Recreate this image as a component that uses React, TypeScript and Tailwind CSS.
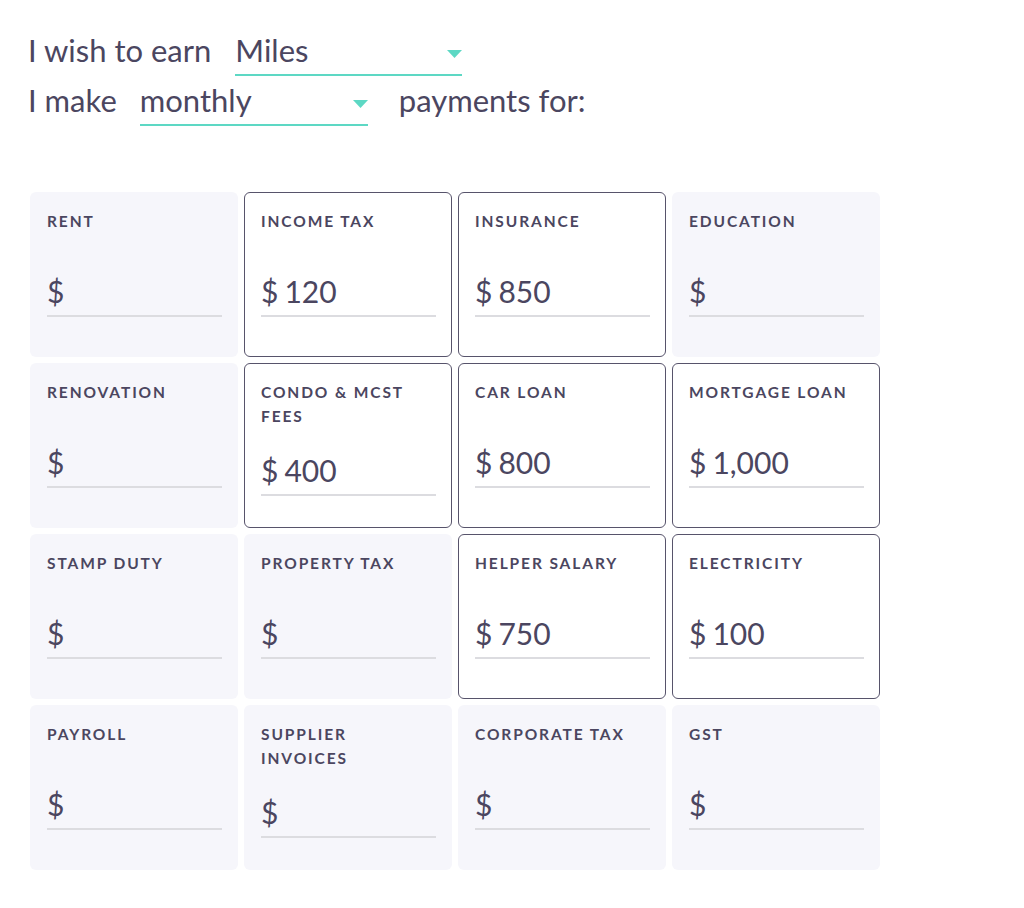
import { useState } from "react";

type Item = { label: string; value?: string };

const items: Item[] = [
  { label: "RENT" },
  { label: "INCOME TAX", value: "120" },
  { label: "INSURANCE", value: "850" },
  { label: "EDUCATION" },
  { label: "RENOVATION" },
  { label: "CONDO & MCST FEES", value: "400" },
  { label: "CAR LOAN", value: "800" },
  { label: "MORTGAGE LOAN", value: "1,000" },
  { label: "STAMP DUTY" },
  { label: "PROPERTY TAX" },
  { label: "HELPER SALARY", value: "750" },
  { label: "ELECTRICITY", value: "100" },
  { label: "PAYROLL" },
  { label: "SUPPLIER INVOICES" },
  { label: "CORPORATE TAX" },
  { label: "GST" },
];

function Caret() {
  return (
    <svg width="15" height="8" viewBox="0 0 15 8" className="shrink-0 mb-[12px]">
      <path d="M0 0h15L7.5 8z" fill="#5dd8c4" />
    </svg>
  );
}

function Picker({ value, width }: { value: string; width: string }) {
  return (
    <div
      className={`${width} flex items-end justify-between border-b-2 border-[#5dd8c4] pb-[4px]`}
    >
      <span className="leading-[40px]">{value}</span>
      <Caret />
    </div>
  );
}

function PaymentCard({ item }: { item: Item }) {
  const filled = !!item.value;
  return (
    <div
      className={
        filled
          ? "h-[165px] rounded-[6px] border-[1.5px] border-[#57536b] bg-white pl-[16px] pr-[15px] pt-[16px]"
          : "h-[165px] rounded-[6px] bg-[#f6f6fb] pl-[17px] pr-[16px] pt-[17px]"
      }
    >
      <div className="min-h-[40px] text-[15.5px] font-bold leading-[24px] tracking-[1.9px] text-[#4b4660]">
        {item.label}
      </div>
      <div className="mt-[20px] h-[48px] border-b-2 border-[#dcdce0] flex items-end pb-[6px] text-[30px] leading-[36px] text-[#4b4660]">
        <span className="mr-[6px]">$</span>
        <span>{item.value ?? ""}</span>
      </div>
    </div>
  );
}

export default function App() {
  const [earn] = useState("Miles");
  const [freq] = useState("monthly");

  return (
    <div
      className="min-h-[908px] bg-white pl-[28px] pt-[30px] text-[#4b4660]"
      style={{ fontFamily: "Lato, 'Open Sans', sans-serif" }}
    >
      <div className="text-[31px]">
        <div className="flex items-end">
          <span className="leading-[40px] pb-[6px]">I wish to earn</span>
          <div className="ml-[24px]">
            <Picker value={earn} width="w-[227px]" />
          </div>
        </div>
        <div className="flex items-end mt-[4px]">
          <span className="leading-[40px] pb-[6px]">I make</span>
          <div className="ml-[23px]">
            <Picker value={freq} width="w-[228px]" />
          </div>
          <span className="ml-[31px] leading-[40px] pb-[6px]">payments for:</span>
        </div>
      </div>

      <div className="mt-[66px] ml-[2px] grid w-[850px] grid-cols-4 gap-[6px]">
        {items.map((item) => (
          <PaymentCard key={item.label} item={item} />
        ))}
      </div>
    </div>
  );
}
